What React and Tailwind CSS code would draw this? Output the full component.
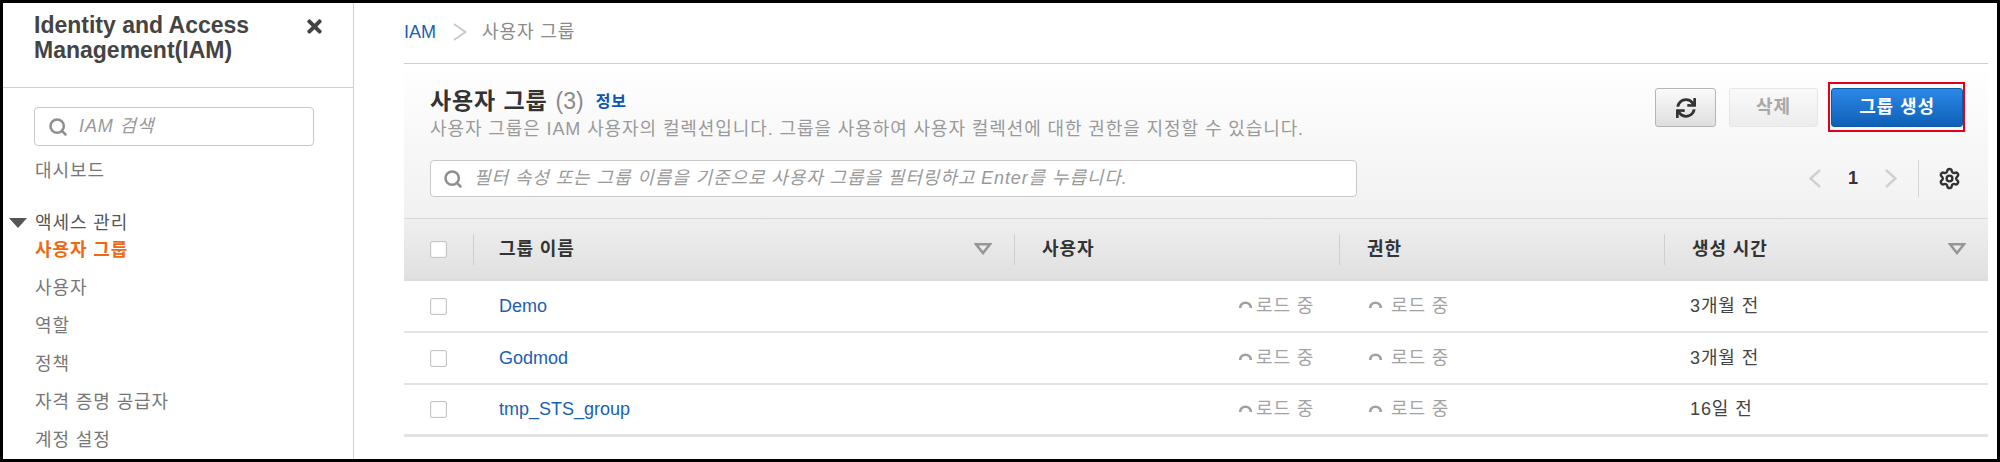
import React from "react";
import { FaSync, FaTimes } from "react-icons/fa";
import { Search, Settings } from "lucide-react";

const navItems = ["사용자", "역할", "정책", "자격 증명 공급자", "계정 설정"];

const groups = [
  { name: "Demo", created: "3개월 전" },
  { name: "Godmod", created: "3개월 전" },
  { name: "tmp_STS_group", created: "16일 전" },
];

const Checkbox = () => (
  <span className="block w-[17px] h-[17px] rounded-[2px] border border-[#c6c6c6] bg-white shadow-[inset_0_0_2px_#ddd]" />
);

const SortArrow = () => (
  <svg width="18" height="12" viewBox="0 0 18 12">
    <path d="M2 1.2h14L9 10z" fill="#ececec" stroke="#969696" strokeWidth="2.6" />
  </svg>
);

// pager and breadcrumb chevrons are taller than the lucide ones
const Chevron = ({ dir = "right", w = 12, h = 19, stroke = "#d0d0d0", width = 2.4 }) => (
  <svg width={w} height={h} viewBox={`0 0 ${w} ${h}`} className="shrink-0">
    <path
      d={dir === "right" ? `M1 1L${w - 1.5} ${h / 2}L1 ${h - 1}` : `M${w - 1} 1L1.5 ${h / 2}L${w - 1} ${h - 1}`}
      fill="none"
      stroke={stroke}
      strokeWidth={width}
    />
  </svg>
);

const Loading = ({ gap }) => (
  <span className={`flex items-center text-[18px] text-[#a3a3a3] ${gap}`}>
    <svg width="13" height="13" viewBox="0 0 13 13" className="mt-[-3px] shrink-0">
      <path d="M1.2 10A5.3 5.3 0 0 1 11.8 10" fill="none" stroke="#a0a0a0" strokeWidth="2.6" />
    </svg>
    로드 중
  </span>
);

const HeadCell = ({ label, width, arrow, padding = "pl-[27px]" }) => (
  <div className={`${width} flex items-center justify-between pr-[22px] ${padding}`}>
    <span className="text-[18px] font-bold text-[#333]">{label}</span>
    {arrow && <SortArrow />}
  </div>
);

const App = () => {
  return (
    <div className="h-screen w-full border-[3px] border-black bg-white flex overflow-hidden tracking-[0.9px] font-['Liberation_Sans','Noto_Sans_CJK_KR',sans-serif]">
      {/* sidebar */}
      <aside className="w-[351px] shrink-0 border-r border-[#ccd2d2] overflow-hidden">
        <div className="h-[85px] border-b border-[#d0d0d0] pl-[31px] pr-[28px] pt-[10px] flex justify-between">
          <h1 className="text-[23px] leading-[25px] font-bold tracking-normal text-[#444]">
            Identity and Access
            <br />
            Management(IAM)
          </h1>
          <FaTimes className="text-[#444] mt-[3px]" size={21} />
        </div>
        <div className="pl-[31px] pr-[39px]">
          <div className="mt-[19px] h-[39px] rounded-[4px] border border-[#c8c8c8] flex items-center pl-[13px]">
            <Search size={20} strokeWidth={3} className="text-[#8f8f8f]" />
            <span className="ml-[11px] text-[18px] italic text-[#999]">IAM 검색</span>
          </div>
          <div className="mt-[6px] h-[38px] flex items-center text-[18px] text-[#777] pl-[1px]">대시보드</div>
        </div>
        <div className="mt-[20px] h-[26px] flex items-center pl-[6px]">
          <svg width="18" height="10" viewBox="0 0 18 10">
            <path d="M0 0h18L9 10z" fill="#555" />
          </svg>
          <span className="ml-[8px] text-[18px] text-[#555]">액세스 관리</span>
        </div>
        <div className="pl-[32px] h-[28px] mb-[5px] flex items-center text-[18px] font-bold text-[#f0690f]">사용자 그룹</div>
        <nav className="pl-[32px]">
          {navItems.map((item) => (
            <div key={item} className="h-[38px] flex items-center text-[18px] text-[#777]">
              {item}
            </div>
          ))}
        </nav>
      </aside>

      {/* main */}
      <main className="flex-1 min-w-0 pl-[50px] pr-[9px]">
        <div className="h-[60px] pb-[2px] flex items-center text-[18px]">
          <span className="text-[#1a5fb4] tracking-normal">IAM</span>
          <span className="ml-[17px] mr-[15px]">
            <Chevron w={14} h={18} stroke="#c8c8c8" width={1.8} />
          </span>
          <span className="text-[#8a8a8a]">사용자 그룹</span>
        </div>

        <section className="h-[155px] border-t border-[#d0d0d0] bg-gradient-to-b from-white to-[#f1f1f1] pl-[26px] pr-[23px]">
          <div className="h-[96px] flex justify-between">
            <div className="pt-[21px]">
              <div className="flex items-center h-[32px]">
                <h2 className="text-[23px] font-bold text-[#333]">사용자 그룹</h2>
                <span className="ml-[8px] text-[23px] tracking-normal text-[#8a8a8a]">(3)</span>
                <a className="ml-[12px] mt-[2px] text-[16px] font-bold text-[#0b55b5]">정보</a>
              </div>
              <p className="mt-[1px] text-[18px] leading-[22px] text-[#9a9a9a]">
                사용자 그룹은 IAM 사용자의 컬렉션입니다. 그룹을 사용하여 사용자 컬렉션에 대한 권한을 지정할 수 있습니다.
              </p>
            </div>
            <div className="flex pt-[18px] items-start">
              <button className="mt-[6px] w-[61px] h-[39px] rounded-[3px] border border-[#b5b5b5] bg-gradient-to-b from-[#fafafa] to-[#dedede] flex items-center justify-center text-[#333]">
                <FaSync size={20} />
              </button>
              <button className="mt-[6px] ml-[13px] w-[89px] h-[39px] rounded-[3px] border border-[#e6e6e6] bg-gradient-to-b from-[#fafafa] to-[#ececec] text-[18px] font-bold text-[#a8a8a8]">
                삭제
              </button>
              <div className="ml-[10px] w-[137px] h-[50px] border-[2px] border-[#e4001b] pl-[1px] pt-[4px]">
                <button className="block w-[132px] h-[39px] rounded-[3px] border border-[#0e5aa8] bg-gradient-to-b from-[#2b88e8] to-[#0e60b6] text-[18px] font-bold text-white">
                  그룹 생성
                </button>
              </div>
            </div>
          </div>
          <div className="flex items-center justify-between h-[37px]">
            <div className="w-[927px] h-[37px] rounded-[4px] border border-[#c8c8c8] bg-white flex items-center pl-[12px]">
              <Search size={20} strokeWidth={3} className="text-[#8f8f8f]" />
              <span className="ml-[11px] text-[18px] italic text-[#999]">
                필터 속성 또는 그룹 이름을 기준으로 사용자 그룹을 필터링하고 Enter를 누릅니다.
              </span>
            </div>
            <div className="flex items-center pr-[4px]">
              <Chevron dir="left" />
              <span className="mx-[27px] text-[18px] font-bold tracking-normal text-[#333]">1</span>
              <Chevron />
              <span className="ml-[21px] mr-[19px] h-[37px] w-px bg-[#d5d5d5]" />
              <Settings size={23} strokeWidth={2.5} className="text-[#333]" />
            </div>
          </div>
        </section>

        <div className="h-[61px] border-t border-[#d9d9d9] bg-gradient-to-b from-[#efefef] to-[#e0e0e0] flex items-center">
          <div className="w-[69px] pl-[26px]">
            <Checkbox />
          </div>
          <div className="flex flex-1 h-[31px] [&>div]:border-l [&>div]:border-[#cfcfcf]">
            <HeadCell label="그룹 이름" width="w-[541px]" arrow padding="pl-[25px]" />
            <HeadCell label="사용자" width="w-[325px]" />
            <HeadCell label="권한" width="w-[325px]" />
            <HeadCell label="생성 시간" width="flex-1" arrow />
          </div>
        </div>

        <div className="border-t-2 border-[#dcdcdc]">
          {groups.map((group) => (
            <div key={group.name} className="h-[52px] border-b-2 border-[#e3e3e3] flex items-center last:border-b-[3px]">
              <div className="w-[69px] pl-[26px]">
                <Checkbox />
              </div>
              <div className="w-[541px] pl-[26px] text-[18px] tracking-normal text-[#1a5fb4]">{group.name}</div>
              <div className="w-[325px] pl-[225px]">
                <Loading gap="gap-[4px]" />
              </div>
              <div className="w-[325px] pl-[30px]">
                <Loading gap="gap-[9px]" />
              </div>
              <div className="flex-1 pl-[26px] text-[18px] text-[#444]">{group.created}</div>
            </div>
          ))}
        </div>
      </main>
    </div>
  );
};

export default App;
